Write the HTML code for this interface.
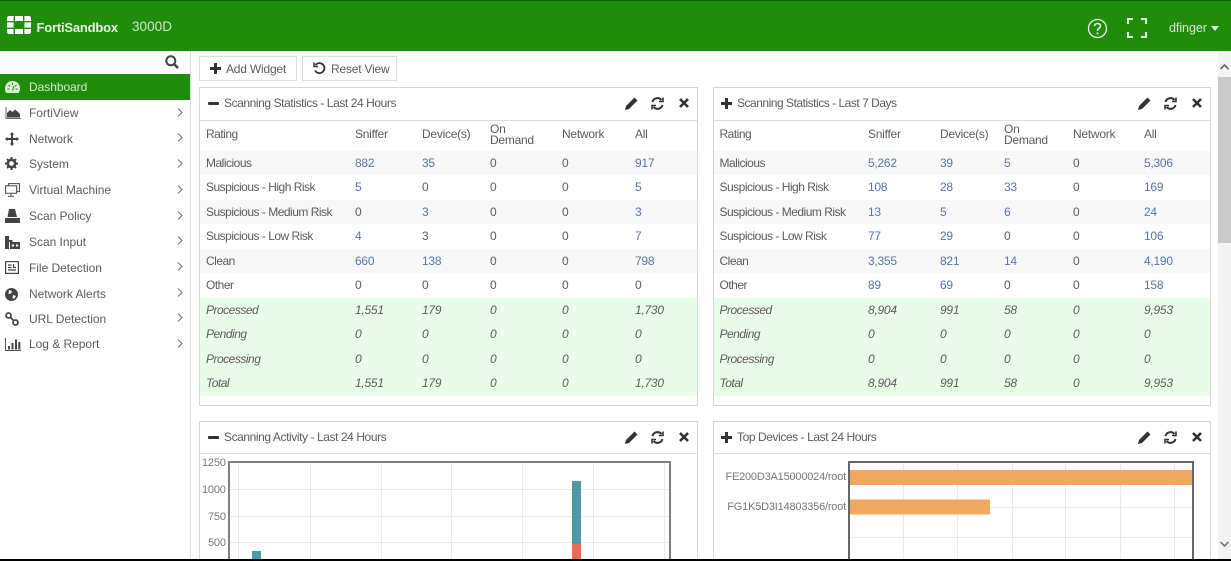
<!DOCTYPE html>
<html><head><meta charset="utf-8"><style>
*{box-sizing:border-box}
html,body{margin:0;padding:0;width:1231px;height:561px;overflow:hidden;background:#fff}
body{font:12px/1 "Liberation Sans",sans-serif;color:#5c5c5c;position:relative;filter:blur(.3px)}
.a{position:absolute}
#top{left:0;top:0;width:1231px;height:51px;background:#1f8c0c;border-top:1px solid #17600c}
.nav{left:0;width:190px;height:26px;line-height:26px;padding-left:29px;letter-spacing:-.03px;color:#5c5c5c}
.w{position:absolute;background:#fff;border:1px solid #d6d6d6}
.wh{position:absolute;left:0;top:0;right:0;height:33px;border-bottom:1px solid #ddd;line-height:31px;padding-left:24px;letter-spacing:-.42px;color:#5c5c5c}
.wh svg{position:absolute}
.rr .wh{padding-left:23px}
.r{position:absolute;left:0;width:100%;display:grid;height:24.55px;line-height:24px;letter-spacing:-.25px;padding-left:6px}
.r span:first-child{letter-spacing:-.5px;white-space:nowrap}
.l .r{grid-template-columns:149px 67px 68px 72px 73px 50px}
.rr .r{padding-left:5.5px;grid-template-columns:148.5px 72px 64px 69px 71px 50px}
.s{background:#f8f8f8}
.g{background:#e9fbe9;font-style:italic}
.b{color:#5a76a4}
.od{line-height:10.5px;padding-top:2px;display:block}
.btn{position:absolute;top:56px;height:25px;border:1px solid #ddd;background:#fff;line-height:24px;letter-spacing:-.2px;color:#5c5c5c}
.btn svg{position:absolute}
.tick{position:absolute;font-size:11px;color:#777;letter-spacing:-.2px}
.ch{position:absolute;left:177px}
</style></head><body>

<div class="a" id="top"></div>
<svg class="a" style="left:7px;top:16px" width="24" height="18" viewBox="0 0 24 18" fill="#fff"><path d="M0 5V2.500Q0 0 2.500 0H6.600V5ZM8 0H16V5H8ZM17.400 0H21.500Q24 0 24 2.500V5H17.400ZM0 6.400H6.600V11.600H0ZM17.400 6.400H24V11.600H17.400ZM0 13H6.600V18H2.500Q0 18 0 15.500ZM8 13H16V18H8ZM17.400 13H24V15.500Q24 18 21.500 18H17.400Z"/></svg>
<div class="a" style="left:36.500px;top:20.500px;font-size:13px;font-weight:bold;color:#e6f3e2;letter-spacing:-.2px;white-space:nowrap">FortiSandbox</div>
<div class="a" style="left:132px;top:20px;font-size:13.500px;color:#cfe6c9;white-space:nowrap;letter-spacing:.05px">3000D</div>
<svg class="a" style="left:1087px;top:18px" width="21" height="21" viewBox="0 0 21 21" fill="none" stroke="#e4f2e0" stroke-width="1.300"><circle cx="10.500" cy="10.500" r="9"/><path d="M7.500 8.200Q7.700 5.500 10.500 5.500Q13.400 5.500 13.400 8Q13.400 9.500 11.800 10.500Q10.500 11.300 10.500 13" stroke-width="1.600"/><path d="M10.500 14.500v1.800" stroke-width="1.800"/></svg>
<svg class="a" style="left:1127px;top:18px" width="20" height="20" viewBox="0 0 20 20" fill="none" stroke="#eef7ea" stroke-width="2"><path d="M1 6V1H6M14 1H19V6M1 14V19H6M14 19H19V14"/></svg>
<div class="a" style="left:1169px;top:22px;font-size:12.500px;color:#d5e9cf;letter-spacing:-.05px;white-space:nowrap">dfinger</div>
<svg class="a" style="left:1211px;top:26px" width="8" height="5" viewBox="0 0 8 5" fill="#eef7ea"><path d="M0 0H8L4 5Z"/></svg>

<!-- sidebar -->
<div class="a" style="left:190px;top:51px;width:1px;height:508px;background:#ddd"></div>
<svg class="a" style="left:165px;top:55px" width="14" height="14" viewBox="0 0 14 14" fill="none" stroke="#444" stroke-width="2"><circle cx="5.800" cy="5.800" r="4.500"/><path d="M9 9L13 13" stroke-width="2.600"/></svg>
<div class="a" style="left:0;top:74px;width:190px;height:26px;background:#1f8c0c;color:#d4e9cf;line-height:26px;padding-left:29px;letter-spacing:-.05px">Dashboard</div>
<svg class="a" style="left:5px;top:81px" width="15" height="12" viewBox="0 0 15 12"><path d="M7.500 0A7.500 7.500 0 0 0 1.500 12H13.500A7.500 7.500 0 0 0 7.500 0Z" fill="#dcefd8"/><path d="M7.500 2V4M3.500 4L5 5.300M11.500 4L10 5.300M2.500 8H4.500M10.500 8H12.500M7.500 9.500L9 5" stroke="#1f8c0c" stroke-width="1.100" fill="none"/></svg>

<div class="a nav" style="top:100px">FortiView</div>
<svg class="a" style="left:5px;top:107px" width="16" height="12" viewBox="0 0 16 12"><path d="M1 0V11.500H16" fill="none" stroke="#666" stroke-width="1"/><path d="M2 10.500V6L5 3L7.500 5L10 2.500L13 5L15 7V10.500Z" fill="#444"/></svg>
<div class="a nav" style="top:126px">Network</div>
<svg class="a" style="left:5px;top:132px" width="14" height="14" viewBox="0 0 14 14" fill="#444"><path d="M7 0L9.300 2.500H8V6H11.500V4.700L14 7L11.500 9.300V8H8V11.500H9.300L7 14L4.700 11.500H6V8H2.500V9.300L0 7L2.500 4.700V6H6V2.500H4.700Z"/></svg>
<div class="a nav" style="top:151px">System</div>
<svg class="a" style="left:5px;top:157px" width="13" height="13" viewBox="0 0 13 13"><circle cx="6.500" cy="6.500" r="3.700" fill="none" stroke="#444" stroke-width="2.600"/><path d="M6.500 0V13M0 6.500H13M2 2L11 11M11 2L2 11" stroke="#444" stroke-width="2" stroke-dasharray="2.200 8.600 2.200"/></svg>
<div class="a nav" style="top:177px">Virtual Machine</div>
<svg class="a" style="left:5px;top:183px" width="15" height="14" viewBox="0 0 15 14" fill="none" stroke="#555" stroke-width="1.100"><rect x="3.500" y=".6" width="11" height="8"/><rect x=".6" y="2.800" width="11" height="7.500" fill="#fff"/><path d="M6 10.500V13M3 13.300H9"/></svg>
<div class="a nav" style="top:203px">Scan Policy</div>
<svg class="a" style="left:5px;top:209px" width="15" height="14" viewBox="0 0 15 14" fill="#444"><path d="M4 0H10L12 8H2.500Z"/><path d="M0 9H15V14H0Z"/></svg>
<div class="a nav" style="top:229px">Scan Input</div>
<svg class="a" style="left:5px;top:236px" width="15" height="13" viewBox="0 0 15 13" fill="#444"><path d="M0 0H4V4H7.500V6H4V13H0Z"/><path d="M5 6H15V13H5ZM6.800 8.500V10.500H9V8.500ZM11 8.500V10.500H13.200V8.500Z" fill-rule="evenodd"/></svg>
<div class="a nav" style="top:255px">File Detection</div>
<svg class="a" style="left:5px;top:261px" width="14" height="13" viewBox="0 0 14 13" fill="none" stroke="#444" stroke-width="1.200"><rect x=".6" y=".6" width="12.800" height="11.800"/><path d="M3 4H6.500M3 6.500H6.500M3 9H11M8.500 3V6.500H11"/></svg>
<div class="a nav" style="top:281px">Network Alerts</div>
<svg class="a" style="left:5px;top:288px" width="13" height="13" viewBox="0 0 13 13"><circle cx="6.500" cy="6.500" r="6.500" fill="#444"/><path d="M4 2L7 3L6 5.500L3.500 6ZM8 7L11 8L9 11L7.500 10Z" fill="#fff"/></svg>
<div class="a nav" style="top:306px">URL Detection</div>
<svg class="a" style="left:5px;top:312px" width="14" height="14" viewBox="0 0 14 14" fill="none" stroke="#444" stroke-width="1.700"><circle cx="3.500" cy="3.500" r="2.500"/><circle cx="10.500" cy="10.500" r="2.500"/><path d="M5 5L9 9"/></svg>
<div class="a nav" style="top:331px">Log &amp; Report</div>
<svg class="a" style="left:5px;top:338px" width="16" height="13" viewBox="0 0 16 13"><path d="M.5 0V12.500H16" fill="none" stroke="#555"/><path d="M3 8H5V11.500H3ZM6.500 5H8.500V11.500H6.500ZM10 1.500H12V11.500H10ZM13.300 4H15.300V11.500H13.300Z" fill="#444"/></svg>

<svg class="ch" style="top:107px" width="6" height="11" viewBox="0 0 6 11" fill="none" stroke="#777" stroke-width="1.100"><path d="M1 1.500L5 5.500L1 9.500"/></svg>
<svg class="ch" style="top:132px" width="6" height="11" viewBox="0 0 6 11" fill="none" stroke="#777" stroke-width="1.100"><path d="M1 1.500L5 5.500L1 9.500"/></svg>
<svg class="ch" style="top:158px" width="6" height="11" viewBox="0 0 6 11" fill="none" stroke="#777" stroke-width="1.100"><path d="M1 1.500L5 5.500L1 9.500"/></svg>
<svg class="ch" style="top:184px" width="6" height="11" viewBox="0 0 6 11" fill="none" stroke="#777" stroke-width="1.100"><path d="M1 1.500L5 5.500L1 9.500"/></svg>
<svg class="ch" style="top:210px" width="6" height="11" viewBox="0 0 6 11" fill="none" stroke="#777" stroke-width="1.100"><path d="M1 1.500L5 5.500L1 9.500"/></svg>
<svg class="ch" style="top:235px" width="6" height="11" viewBox="0 0 6 11" fill="none" stroke="#777" stroke-width="1.100"><path d="M1 1.500L5 5.500L1 9.500"/></svg>
<svg class="ch" style="top:261px" width="6" height="11" viewBox="0 0 6 11" fill="none" stroke="#777" stroke-width="1.100"><path d="M1 1.500L5 5.500L1 9.500"/></svg>
<svg class="ch" style="top:287px" width="6" height="11" viewBox="0 0 6 11" fill="none" stroke="#777" stroke-width="1.100"><path d="M1 1.500L5 5.500L1 9.500"/></svg>
<svg class="ch" style="top:312px" width="6" height="11" viewBox="0 0 6 11" fill="none" stroke="#777" stroke-width="1.100"><path d="M1 1.500L5 5.500L1 9.500"/></svg>
<svg class="ch" style="top:338px" width="6" height="11" viewBox="0 0 6 11" fill="none" stroke="#777" stroke-width="1.100"><path d="M1 1.500L5 5.500L1 9.500"/></svg>

<!-- buttons -->
<div class="btn" style="left:199px;width:98px;padding-left:26px">Add Widget<svg style="left:10px;top:6px" width="11" height="11" viewBox="0 0 11 11" fill="#333"><path d="M4 0H7V4H11V7H7V11H4V7H0V4H4Z"/></svg></div>
<div class="btn" style="left:302px;width:95px;padding-left:28px">Reset View<svg style="left:10px;top:5px" width="13" height="13" viewBox="0 0 13 13" fill="none" stroke="#333" stroke-width="1.800"><path d="M2.500 3A5 5 0 1 1 2 8.500"/><path d="M1 .5V4.500H5" stroke-width="1.500"/></svg></div>

<!-- widget 1 -->
<div class="w l" style="left:199px;top:87px;width:499px;height:319px">
<div class="wh">Scanning Statistics - Last 24 Hours
<svg style="left:8px;top:14px" width="11" height="3"><rect width="11" height="3" rx="1" fill="#333"/></svg>
<svg style="left:425px;top:9px" width="13" height="13" viewBox="0 0 13 13" fill="#333"><path d="M9.500 0.500L12.500 3.500L4 12L0 13L1 9Z"/></svg>
<svg style="left:451px;top:9px" width="13" height="13" viewBox="0 0 13 13" fill="none" stroke="#333" stroke-width="2"><path d="M1.500 5A5.200 5.200 0 0 1 10.500 3M11.500 8A5.200 5.200 0 0 1 2.500 10"/><path d="M12 .5V4.500H8M1 12.500V8.500H5" stroke-width="1.600"/></svg>
<svg style="left:479px;top:10px" width="10" height="10" viewBox="0 0 10 10" stroke="#333" stroke-width="2.600"><path d="M1 1L9 9M9 1L1 9"/></svg>
</div>
<div class="r" style="top:34px"><span>Rating</span><span>Sniffer</span><span>Device(s)</span><span class="od">On<br>Demand</span><span>Network</span><span>All</span></div>
<div class="r s" style="top:62.500px"><span>Malicious</span><span class="b">882</span><span class="b">35</span><span>0</span><span>0</span><span class="b">917</span></div>
<div class="r" style="top:87px"><span>Suspicious - High Risk</span><span class="b">5</span><span>0</span><span>0</span><span>0</span><span class="b">5</span></div>
<div class="r s" style="top:111.500px"><span>Suspicious - Medium Risk</span><span>0</span><span class="b">3</span><span>0</span><span>0</span><span class="b">3</span></div>
<div class="r" style="top:136px"><span>Suspicious - Low Risk</span><span class="b">4</span><span>3</span><span>0</span><span>0</span><span class="b">7</span></div>
<div class="r s" style="top:160.500px"><span>Clean</span><span class="b">660</span><span class="b">138</span><span>0</span><span>0</span><span class="b">798</span></div>
<div class="r" style="top:185px"><span>Other</span><span>0</span><span>0</span><span>0</span><span>0</span><span>0</span></div>
<div class="r g" style="top:209.500px"><span>Processed</span><span>1,551</span><span>179</span><span>0</span><span>0</span><span>1,730</span></div>
<div class="r g" style="top:234px"><span>Pending</span><span>0</span><span>0</span><span>0</span><span>0</span><span>0</span></div>
<div class="r g" style="top:258.500px"><span>Processing</span><span>0</span><span>0</span><span>0</span><span>0</span><span>0</span></div>
<div class="r g" style="top:283px"><span>Total</span><span>1,551</span><span>179</span><span>0</span><span>0</span><span>1,730</span></div>
</div>

<!-- widget 2 -->
<div class="w rr" style="left:713px;top:87px;width:498px;height:319px">
<div class="wh" style="letter-spacing:-.48px">Scanning Statistics - Last 7 Days
<svg style="left:7px;top:10px" width="11" height="11" viewBox="0 0 11 11" fill="#333"><path d="M4 0H7V4H11V7H7V11H4V7H0V4H4Z"/></svg>
<svg style="left:424px;top:9px" width="13" height="13" viewBox="0 0 13 13" fill="#333"><path d="M9.500 0.500L12.500 3.500L4 12L0 13L1 9Z"/></svg>
<svg style="left:450px;top:9px" width="13" height="13" viewBox="0 0 13 13" fill="none" stroke="#333" stroke-width="2"><path d="M1.500 5A5.200 5.200 0 0 1 10.500 3M11.500 8A5.200 5.200 0 0 1 2.500 10"/><path d="M12 .5V4.500H8M1 12.500V8.500H5" stroke-width="1.600"/></svg>
<svg style="left:478px;top:10px" width="10" height="10" viewBox="0 0 10 10" stroke="#333" stroke-width="2.600"><path d="M1 1L9 9M9 1L1 9"/></svg>
</div>
<div class="r" style="top:34px"><span>Rating</span><span>Sniffer</span><span>Device(s)</span><span class="od">On<br>Demand</span><span>Network</span><span>All</span></div>
<div class="r s" style="top:62.500px"><span>Malicious</span><span class="b">5,262</span><span class="b">39</span><span class="b">5</span><span>0</span><span class="b">5,306</span></div>
<div class="r" style="top:87px"><span>Suspicious - High Risk</span><span class="b">108</span><span class="b">28</span><span class="b">33</span><span>0</span><span class="b">169</span></div>
<div class="r s" style="top:111.500px"><span>Suspicious - Medium Risk</span><span class="b">13</span><span class="b">5</span><span class="b">6</span><span>0</span><span class="b">24</span></div>
<div class="r" style="top:136px"><span>Suspicious - Low Risk</span><span class="b">77</span><span class="b">29</span><span>0</span><span>0</span><span class="b">106</span></div>
<div class="r s" style="top:160.500px"><span>Clean</span><span class="b">3,355</span><span class="b">821</span><span class="b">14</span><span>0</span><span class="b">4,190</span></div>
<div class="r" style="top:185px"><span>Other</span><span class="b">89</span><span class="b">69</span><span>0</span><span>0</span><span class="b">158</span></div>
<div class="r g" style="top:209.500px"><span>Processed</span><span>8,904</span><span>991</span><span>58</span><span>0</span><span>9,953</span></div>
<div class="r g" style="top:234px"><span>Pending</span><span>0</span><span>0</span><span>0</span><span>0</span><span>0</span></div>
<div class="r g" style="top:258.500px"><span>Processing</span><span>0</span><span>0</span><span>0</span><span>0</span><span>0</span></div>
<div class="r g" style="top:283px"><span>Total</span><span>8,904</span><span>991</span><span>58</span><span>0</span><span>9,953</span></div>
</div>

<!-- widget 3 -->
<div class="w" style="left:199px;top:421px;width:499px;height:160px">
<div class="wh" style="height:32px;line-height:31px">Scanning Activity - Last 24 Hours
<svg style="left:8px;top:14px" width="11" height="3"><rect width="11" height="3" rx="1" fill="#333"/></svg>
<svg style="left:425px;top:9px" width="13" height="13" viewBox="0 0 13 13" fill="#333"><path d="M9.500 0.500L12.500 3.500L4 12L0 13L1 9Z"/></svg>
<svg style="left:451px;top:9px" width="13" height="13" viewBox="0 0 13 13" fill="none" stroke="#333" stroke-width="2"><path d="M1.500 5A5.200 5.200 0 0 1 10.500 3M11.500 8A5.200 5.200 0 0 1 2.500 10"/><path d="M12 .5V4.500H8M1 12.500V8.500H5" stroke-width="1.600"/></svg>
<svg style="left:479px;top:10px" width="10" height="10" viewBox="0 0 10 10" stroke="#333" stroke-width="2.600"><path d="M1 1L9 9M9 1L1 9"/></svg>
</div></div>
<div class="tick" style="left:202px;top:458px">1250</div>
<div class="tick" style="left:202px;top:485px">1000</div>
<div class="tick" style="left:208px;top:512px">750</div>
<div class="tick" style="left:208px;top:538px">500</div>
<svg class="a" style="left:0;top:0" width="1231" height="561" fill="none">
<path d="M238.500 462V561M310.500 462V561M381.500 462V561M451.500 462V561M522.500 462V561M593.500 462V561M664.500 462V561M229 489.500H670M229 516.500H670M229 542.500H670" stroke="#eaeaea"/>
<path d="M229 561V462H670V561" stroke="#808080" stroke-width="2"/>
<rect x="252" y="551" width="9" height="10" fill="#4f98a8"/>
<rect x="572" y="481" width="9" height="64" fill="#4f98a8"/>
<rect x="572" y="544" width="9" height="17" fill="#ea6b5a"/>

<path d="M903.500 462V561M957.500 462V561M1012.500 462V561M1065.500 462V561M1120.500 462V561M1174.500 462V561M849 507.500H1193M849 537.500H1193" stroke="#eaeaea"/>
<rect x="849" y="470" width="344" height="15" fill="#f0a860"/>
<rect x="849" y="499.500" width="141" height="15" fill="#f0a860"/>
<path d="M849 561V462H1193V561" stroke="#666" stroke-width="2"/>
</svg>

<!-- widget 4 -->
<div class="w rr" style="left:713px;top:421px;width:498px;height:160px;background:transparent">
<div class="wh" style="height:32px;line-height:31px;background:#fff">Top Devices - Last 24 Hours
<svg style="left:7px;top:10px" width="11" height="11" viewBox="0 0 11 11" fill="#333"><path d="M4 0H7V4H11V7H7V11H4V7H0V4H4Z"/></svg>
<svg style="left:424px;top:9px" width="13" height="13" viewBox="0 0 13 13" fill="#333"><path d="M9.500 0.500L12.500 3.500L4 12L0 13L1 9Z"/></svg>
<svg style="left:450px;top:9px" width="13" height="13" viewBox="0 0 13 13" fill="none" stroke="#333" stroke-width="2"><path d="M1.500 5A5.200 5.200 0 0 1 10.500 3M11.500 8A5.200 5.200 0 0 1 2.500 10"/><path d="M12 .5V4.500H8M1 12.500V8.500H5" stroke-width="1.600"/></svg>
<svg style="left:478px;top:10px" width="10" height="10" viewBox="0 0 10 10" stroke="#333" stroke-width="2.600"><path d="M1 1L9 9M9 1L1 9"/></svg>
</div></div>
<div class="tick" style="left:700px;width:146px;text-align:right;top:472px">FE200D3A15000024/root</div>
<div class="tick" style="left:700px;width:146px;text-align:right;top:502px">FG1K5D3I14803356/root</div>

<!-- scrollbar -->
<div class="a" style="left:1218px;top:51px;width:13px;height:508px;background:#f3f3f3"></div>
<div class="a" style="left:1218px;top:77px;width:13px;height:166px;background:#c9c9c9"></div>
<svg class="a" style="left:1220px;top:64px" width="9" height="6" viewBox="0 0 9 6" fill="none" stroke="#666" stroke-width="1.600"><path d="M.5 5L4.500 1L8.500 5"/></svg>
<svg class="a" style="left:1220px;top:541px" width="9" height="6" viewBox="0 0 9 6" fill="none" stroke="#777" stroke-width="1.600"><path d="M.5 1L4.500 5L8.500 1"/></svg>

<div class="a" style="left:0;top:559px;width:1231px;height:2px;background:#000"></div>
</body></html>
